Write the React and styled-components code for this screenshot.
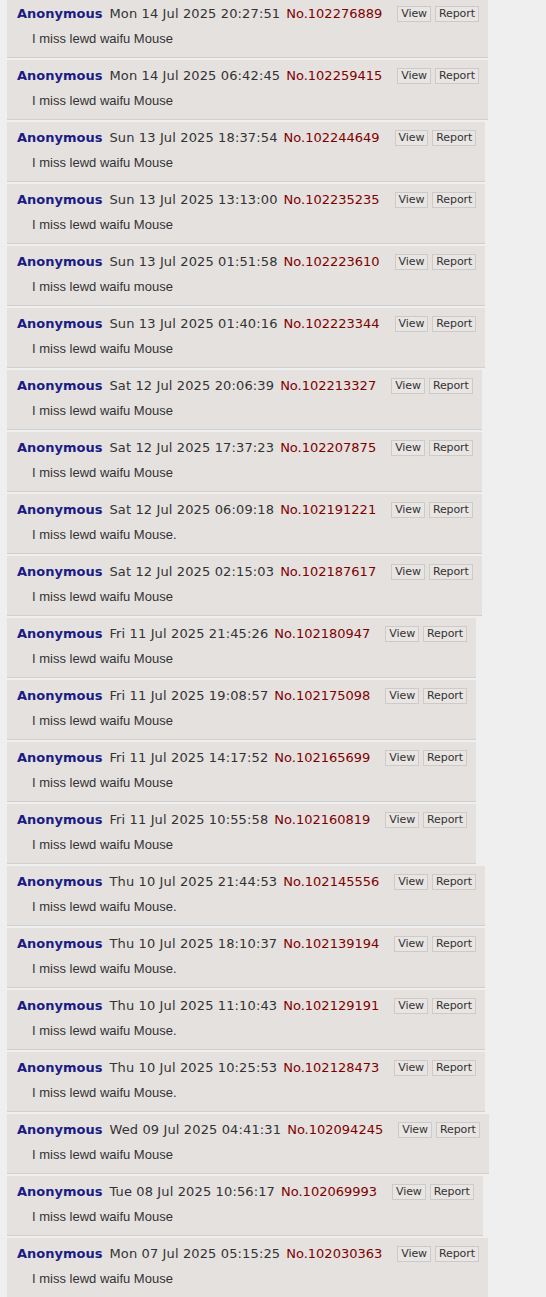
import React from "react";
import styled, { createGlobalStyle } from "styled-components";

const GlobalStyle = createGlobalStyle`
  html, body {
    margin: 0;
    padding: 0;
    background: #efefef;
  }
`;

const posts = [
  { date: "Mon 14 Jul 2025 20:27:51", num: "102276889", text: "I miss lewd waifu Mouse" },
  { date: "Mon 14 Jul 2025 06:42:45", num: "102259415", text: "I miss lewd waifu Mouse" },
  { date: "Sun 13 Jul 2025 18:37:54", num: "102244649", text: "I miss lewd waifu Mouse" },
  { date: "Sun 13 Jul 2025 13:13:00", num: "102235235", text: "I miss lewd waifu Mouse" },
  { date: "Sun 13 Jul 2025 01:51:58", num: "102223610", text: "I miss lewd waifu mouse" },
  { date: "Sun 13 Jul 2025 01:40:16", num: "102223344", text: "I miss lewd waifu Mouse" },
  { date: "Sat 12 Jul 2025 20:06:39", num: "102213327", text: "I miss lewd waifu Mouse" },
  { date: "Sat 12 Jul 2025 17:37:23", num: "102207875", text: "I miss lewd waifu Mouse" },
  { date: "Sat 12 Jul 2025 06:09:18", num: "102191221", text: "I miss lewd waifu Mouse." },
  { date: "Sat 12 Jul 2025 02:15:03", num: "102187617", text: "I miss lewd waifu Mouse" },
  { date: "Fri 11 Jul 2025 21:45:26", num: "102180947", text: "I miss lewd waifu Mouse" },
  { date: "Fri 11 Jul 2025 19:08:57", num: "102175098", text: "I miss lewd waifu Mouse" },
  { date: "Fri 11 Jul 2025 14:17:52", num: "102165699", text: "I miss lewd waifu Mouse" },
  { date: "Fri 11 Jul 2025 10:55:58", num: "102160819", text: "I miss lewd waifu Mouse" },
  { date: "Thu 10 Jul 2025 21:44:53", num: "102145556", text: "I miss lewd waifu Mouse." },
  { date: "Thu 10 Jul 2025 18:10:37", num: "102139194", text: "I miss lewd waifu Mouse." },
  { date: "Thu 10 Jul 2025 11:10:43", num: "102129191", text: "I miss lewd waifu Mouse." },
  { date: "Thu 10 Jul 2025 10:25:53", num: "102128473", text: "I miss lewd waifu Mouse." },
  { date: "Wed 09 Jul 2025 04:41:31", num: "102094245", text: "I miss lewd waifu Mouse" },
  { date: "Tue 08 Jul 2025 10:56:17", num: "102069993", text: "I miss lewd waifu Mouse" },
  { date: "Mon 07 Jul 2025 05:15:25", num: "102030363", text: "I miss lewd waifu Mouse" },
];

const Thread = styled.main`
  display: flex;
  flex-direction: column;
  align-items: flex-start;
  padding-left: 7px;
  margin-top: -2px;
`;

const Post = styled.article`
  width: fit-content;
  background: #e4e1df;
  border-bottom: 1px solid #cfcfcf;
  margin-bottom: 2px;
  padding: 4px 9px 9px 10px;
`;

const Header = styled.div`
  display: flex;
  align-items: center;
  height: 22px;
  font-family: "DejaVu Sans", Verdana, sans-serif;
  font-size: 13px;
  color: #333333;
  white-space: nowrap;
`;

const Name = styled.span`
  font-weight: bold;
  color: #1b1b84;
  margin-right: 7px;
`;

const PostDate = styled.span`
  letter-spacing: 0.13px;
`;

const PostNo = styled.span`
  color: #800000;
  margin-left: 6px;
`;

const Actions = styled.div`
  display: flex;
  gap: 4px;
  margin-left: 15px;
  padding-top: 1px;
`;

const Button = styled.button`
  height: 16px;
  padding: 0 3px;
  margin: 0;
  border: 1px solid #cdcbc9;
  background: #e8e5e3;
  color: #333333;
  font-family: "DejaVu Sans", Tahoma, sans-serif;
  font-size: 11px;
  letter-spacing: -0.1px;
  line-height: 14px;
  cursor: pointer;
`;

const Body = styled.p`
  margin: 6px 0 0 15px;
  font-family: "Liberation Sans", Arial, sans-serif;
  font-size: 13px;
  line-height: 18px;
  color: #333333;
`;

export default function App() {
  return (
    <>
      <GlobalStyle />
      <Thread>
        {posts.map((p) => (
          <Post key={p.num}>
            <Header>
              <Name>Anonymous</Name>
              <PostDate>{p.date}</PostDate>
              <PostNo>No.{p.num}</PostNo>
              <Actions>
                <Button>View</Button>
                <Button>Report</Button>
              </Actions>
            </Header>
            <Body>{p.text}</Body>
          </Post>
        ))}
      </Thread>
    </>
  );
}
